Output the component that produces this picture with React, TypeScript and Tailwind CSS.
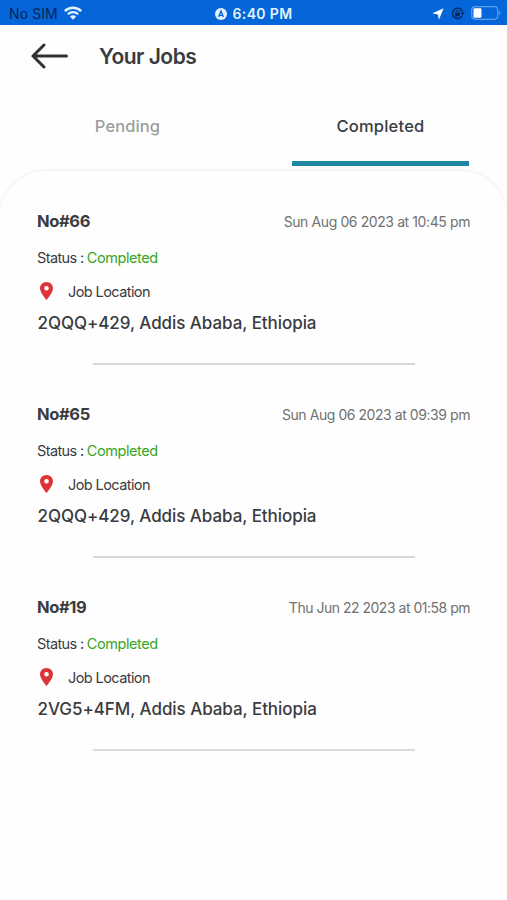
interface Job {
  id: number;
  date: string;
  dateSpacing: string;
  status: string;
  location: string;
  divider: string;
}

const jobs: Job[] = [
  {
    id: 66,
    date: "Sun Aug 06 2023 at 10:45 pm",
    dateSpacing: "tracking-[-0.4px]",
    status: "Completed",
    location: "2QQQ+429, Addis Ababa, Ethiopia",
    divider: "bg-[#d6d6d6]",
  },
  {
    id: 65,
    date: "Sun Aug 06 2023 at 09:39 pm",
    dateSpacing: "tracking-[-0.44px]",
    status: "Completed",
    location: "2QQQ+429, Addis Ababa, Ethiopia",
    divider: "bg-[#d6d6d6]",
  },
  {
    id: 19,
    date: "Thu Jun 22 2023 at 01:58 pm",
    dateSpacing: "tracking-[-0.49px]",
    status: "Completed",
    location: "2VG5+4FM, Addis Ababa, Ethiopia",
    divider: "bg-[#dcdcdc]",
  },
];

export default function App() {
  return (
    <div className="h-[900px] w-[507px] overflow-hidden bg-[#fefefe] font-['Inter',sans-serif] text-[#3a3b3f]">
      <StatusBar />
      <header className="flex h-[62px] items-center pl-[31px]">
        <button type="button" aria-label="Back">
          <BackIcon />
        </button>
        <h1 className="ml-[31px] mt-px text-[21px] font-semibold leading-6 tracking-[-0.5px]">
          Your Jobs
        </h1>
      </header>
      <Tabs />
      <main className="mt-[5px] h-[729px] rounded-t-[46px] bg-[#fefefe] px-[37px] pt-10 shadow-[0_-1px_3px_rgba(0,0,0,0.07)]">
        {jobs.map((job) => (
          <JobItem job={job} key={job.id} />
        ))}
      </main>
    </div>
  );
}

function StatusBar() {
  return (
    <div className="grid h-[25px] grid-cols-3 items-center bg-[#0466d9] pt-[2px] text-[14px] leading-5">
      <div className="flex items-center gap-[6px] pl-[9px] text-[#072357]">
        <span className="tracking-[0.1px]">No SIM</span>
        <WifiIcon />
      </div>
      <div className="flex items-center justify-center gap-[6px] font-semibold text-[#e3f2ff]">
        <svg width="12" height="12" viewBox="0 0 12 12">
          <circle cx="6" cy="6" r="6" fill="#e3f2ff" />
          <path
            d="M3.6 9 6 3l2.4 6M4.5 7.3h3"
            fill="none"
            stroke="#0466d9"
            strokeWidth="1.3"
          />
        </svg>
        <span className="tracking-[0.35px]">6:40 PM</span>
      </div>
      <div className="flex items-center justify-end pr-[6px]">
        <svg width="12" height="12" viewBox="0 0 12 12">
          <path d="M11.7.3 6.9 11.7 5.8 6.4.3 5.2z" fill="#fff" />
        </svg>
        <LockIcon />
        <BatteryIcon />
      </div>
    </div>
  );
}

function Tabs() {
  return (
    <div className="flex h-[79px] justify-between pl-[39px] pr-[38px] text-[16.5px] font-medium">
      <button type="button" className="flex w-[177px] flex-col items-center">
        <span className="mt-[27px] leading-6 tracking-[0.1px] text-[#9c9c9c]">
          Pending
        </span>
      </button>
      <button
        type="button"
        className="flex w-[177px] flex-col items-center justify-between"
      >
        <span className="mt-[27px] leading-6 tracking-[0.2px]">Completed</span>
        <span className="h-[5px] w-full bg-[#1f87a3]" />
      </button>
    </div>
  );
}

function JobItem({ job }: { job: Job }) {
  return (
    <div className="flex h-[193px] flex-col">
      <div className="flex h-5 items-center justify-between">
        <span className="text-[16.5px] font-bold tracking-[-0.35px]">
          No#{job.id}
        </span>
        <span className={`text-[14px] text-[#717171] ${job.dateSpacing}`}>
          {job.date}
        </span>
      </div>
      <div className="mt-[17px] flex h-5 items-center gap-[3px] text-[14.5px]">
        <span className="tracking-[-0.6px]">Status :</span>
        <span className="tracking-[-0.4px] text-[#36a51e]">{job.status}</span>
      </div>
      <div className="mt-[13px] flex h-5 items-center text-[14.5px] tracking-[-0.58px]">
        <PinIcon />
        <span className="ml-[15px] mt-px">Job Location</span>
      </div>
      <p className="mt-3 h-5 pl-[0.5px] text-[17px] font-medium leading-5 tracking-[-0.06px]">
        {job.location}
      </p>
      <div className={`ml-[56px] mt-[30px] h-[2px] w-[322px] ${job.divider}`} />
    </div>
  );
}

function BackIcon() {
  return (
    <svg width="37" height="26" viewBox="0 0 37 26" fill="none">
      <path
        d="M13 2 2 13l11 11M2 13h33.5"
        stroke="#303135"
        strokeWidth="3"
        strokeLinecap="round"
        strokeLinejoin="round"
      />
    </svg>
  );
}

function WifiIcon() {
  return (
    <svg className="-mt-[2px]" width="18" height="14" viewBox="0 0 18 14" fill="none">
      <path d="M.8 5.1a11.6 11.6 0 0 1 16.4 0" stroke="#e3f2ff" strokeWidth="2.4" />
      <path d="M3.8 8.3a7.4 7.4 0 0 1 10.4 0" stroke="#e3f2ff" strokeWidth="2.3" />
      <path d="M5.9 10.5a4.4 4.4 0 0 1 6.2 0L9 13.7z" fill="#e3f2ff" />
    </svg>
  );
}

function LockIcon() {
  return (
    <svg className="ml-[7px]" width="14" height="13" viewBox="0 0 14 13" fill="none">
      <path d="M11.3 8.8a5.2 5.2 0 1 1 .2-4.3" stroke="#072357" strokeWidth="1.3" />
      <path d="M9.6 5.4h4l-2 3z" fill="#072357" />
      <path d="M4.2 6h4.6v3.4H4.2z" fill="#072357" />
      <path d="M5 6.2V5a1.5 1.5 0 0 1 3 0v1.2" stroke="#072357" />
    </svg>
  );
}

function BatteryIcon() {
  return (
    <svg className="-mt-px ml-[6px]" width="30" height="14" viewBox="0 0 30 14" fill="none">
      <rect x=".7" y=".7" width="26" height="12.6" rx="3.5" stroke="#5da0f0" strokeWidth="1.2" />
      <rect x="2.5" y="2.3" width="8" height="9.4" rx="1.3" fill="#fff" />
      <path d="M28 4.8c1.8.6 1.8 3.8 0 4.4z" fill="#5da0f0" />
    </svg>
  );
}

function PinIcon() {
  return (
    <svg className="ml-[3px]" width="13" height="18" viewBox="0 0 14 20" preserveAspectRatio="none">
      <path
        d="M7 0C3.13 0 0 3.13 0 7c0 5.25 7 13 7 13s7-7.75 7-13c0-3.87-3.13-7-7-7zm0 9.5a2.5 2.5 0 1 1 0-5 2.5 2.5 0 0 1 0 5z"
        fill="#dc3437"
      />
    </svg>
  );
}
